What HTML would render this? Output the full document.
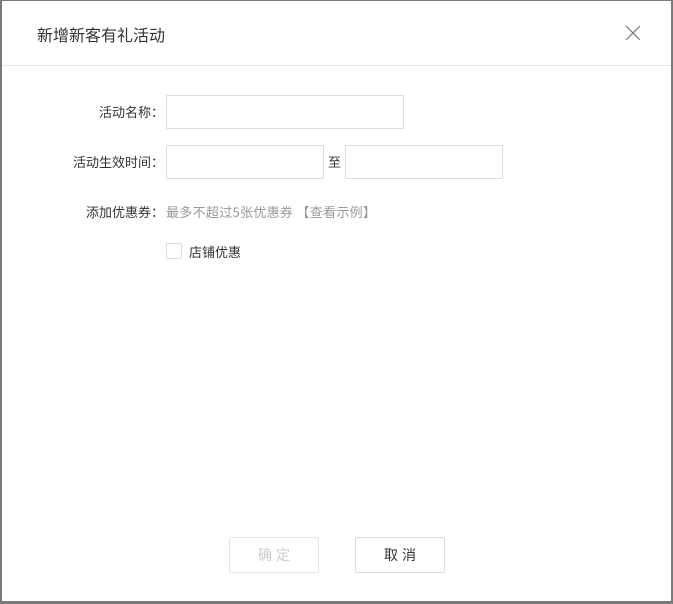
<!DOCTYPE html><html><head><meta charset="utf-8"><style>
body{margin:0;width:673px;height:604px;background:#7a7a7a;font-family:"Noto Sans CJK SC",sans-serif;position:relative;overflow:hidden}
.d{position:absolute;left:2px;top:1px;width:669px;height:600px;background:#fff}
.a{position:absolute}
.t{left:35px;top:22px;font-size:16px;color:#333;line-height:22px}
.hl{left:0;top:64px;width:669px;height:1px;background:#e5e5e5}
.l{font-size:13px;color:#333;text-align:right;width:162px;left:0px;line-height:18px}
.i{border:1px solid #dcdcdc;border-radius:2px;background:#fff;box-sizing:border-box}
.b{border:1px solid #dcdcdc;border-radius:2px;box-sizing:border-box;width:90px;height:36px;text-align:center;line-height:34px;font-size:14px;letter-spacing:4px;padding-left:4px}
</style></head><body><div class="d">
<div class="a t">新增新客有礼活动</div>
<svg class="a" style="left:623px;top:24px" width="16" height="16"><path d="M1 1L15 15M15 1L1 15" stroke="#777" stroke-width="1.2"/></svg>
<div class="a hl"></div>
<div class="a l" style="top:102px">活动名称：</div>
<div class="a i" style="left:164px;top:94px;width:238px;height:34px"></div>
<div class="a l" style="top:152px">活动生效时间：</div>
<div class="a i" style="left:164px;top:144px;width:158px;height:34px"></div>
<div class="a" style="left:326px;top:152px;font-size:13px;color:#333;line-height:18px">至</div>
<div class="a i" style="left:343px;top:144px;width:158px;height:34px"></div>
<div class="a l" style="top:202px">添加优惠券：</div>
<div class="a" style="left:164px;top:202px;font-size:13px;color:#999;line-height:18px;letter-spacing:0.3px">最多不超过5张优惠券 【查看示例】</div>
<div class="a i" style="left:164px;top:242px;width:16px;height:16px"></div>
<div class="a" style="left:187px;top:242px;font-size:13px;color:#333;line-height:18px">店铺优惠</div>
<div class="a b" style="left:227px;top:536px;color:#ccc;border-color:#e5e5e5">确定</div>
<div class="a b" style="left:353px;top:536px;color:#333">取消</div>
</div></body></html>
